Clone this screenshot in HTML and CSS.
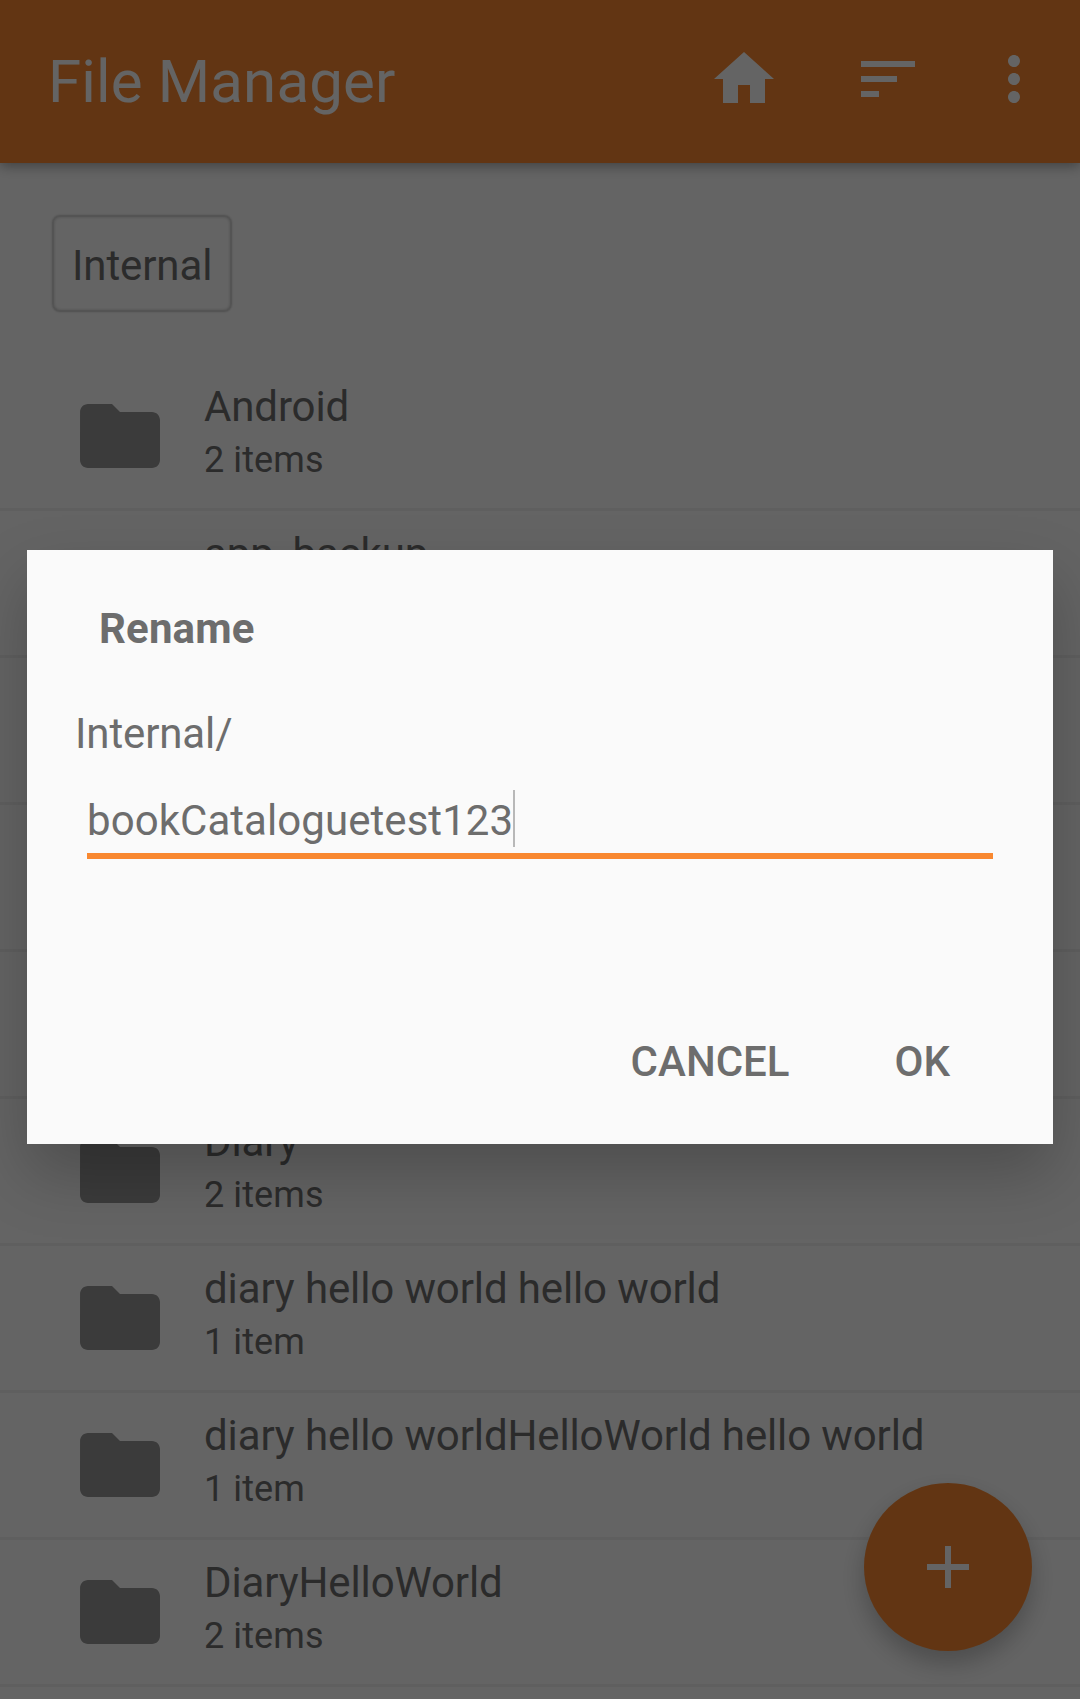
FILE: index.html
```html
<!DOCTYPE html>
<html lang="en">
<head>
<meta charset="utf-8">
<title>File Manager</title>
<link rel="stylesheet" href="styles.css">
</head>
<body>
<svg width="0" height="0" class="defs">
  <symbol id="folder" viewBox="0 0 24 24"><path d="M10 4H4c-1.1 0-1.99.9-1.99 2L2 18c0 1.1.9 2 2 2h16c1.1 0 2-.9 2-2V8c0-1.1-.9-2-2-2h-8l-2-2z"/></symbol>
</svg>
<div class="app">
  <header class="toolbar">
    <h1 class="toolbar-title">File Manager</h1>
    <svg class="action home" viewBox="0 0 24 24"><path d="M10 20v-6h4v6h5v-8h3L12 3 2 12h3v8z"/></svg>
    <svg class="action sort" viewBox="0 0 24 24"><path d="M3 18h6v-2H3v2zM3 6v2h18V6H3zm0 7h12v-2H3v2z"/></svg>
    <svg class="action more" viewBox="0 0 24 24"><path d="M12 8c1.1 0 2-.9 2-2s-.9-2-2-2-2 .9-2 2 .9 2 2 2zm0 2c-1.1 0-2 .9-2 2s.9 2 2 2 2-.9 2-2-.9-2-2-2zm0 6c-1.1 0-2 .9-2 2s.9 2 2 2 2-.9 2-2-.9-2-2-2z"/></svg>
  </header>
  <nav class="path"><span class="crumb">Internal</span></nav>
  <ul class="files">
    <li class="file"><svg class="folder"><use href="#folder"/></svg><div><div class="name">Android</div><div class="count">2 items</div></div></li>
    <li class="file"><svg class="folder"><use href="#folder"/></svg><div><div class="name">app_backup</div></div></li>
    <li class="file"></li>
    <li class="file"></li>
    <li class="file"></li>
    <li class="file"><svg class="folder"><use href="#folder"/></svg><div><div class="name">Diary</div><div class="count">2 items</div></div></li>
    <li class="file"><svg class="folder"><use href="#folder"/></svg><div><div class="name">diary hello world hello world</div><div class="count">1 item</div></div></li>
    <li class="file"><svg class="folder"><use href="#folder"/></svg><div><div class="name">diary hello worldHelloWorld hello world</div><div class="count">1 item</div></div></li>
    <li class="file"><svg class="folder"><use href="#folder"/></svg><div><div class="name">DiaryHelloWorld</div><div class="count">2 items</div></div></li>
  </ul>
  <div class="fab"><svg class="fab-icon" viewBox="0 0 24 24"><path d="M19 13h-6v6h-2v-6H5v-2h6V5h2v6h6v2z"/></svg></div>
</div>
<div class="scrim">
  <section class="dialog">
    <h2 class="dialog-title">Rename</h2>
    <div class="parent">Internal/</div>
    <div class="field"><span>bookCataloguetest123</span><span class="caret"></span></div>
    <div class="buttons"><span class="button">CANCEL</span><span class="button">OK</span></div>
  </section>
</div>
</body>
</html>
```
FILE: styles.css
```css
* { box-sizing: border-box; }
body {
  margin: 0;
  font-family: Roboto, "Liberation Sans", sans-serif;
  font-size: 42px;
  line-height: 50px;
  color: #6d6d6d;
}
.defs { position: absolute; }
.app {
  position: relative;
  width: 1080px;
  height: 1699px;
  overflow: hidden;
  background: #fafafa;
}
.toolbar {
  display: flex;
  align-items: center;
  height: 163px;
  padding: 0 30px 5px 48px;
  background: #f68630;
  box-shadow: 0 3px 12px rgba(0, 0, 0, .36);
}
.toolbar-title {
  flex: 1;
  margin: 0;
  padding-top: 5px;
  font-size: 60px;
  line-height: 72px;
  font-weight: 400;
  letter-spacing: .15px;
  color: #fafafa;
}
.action { width: 72px; height: 72px; fill: #fafafa; }
.sort { margin-left: 72px; }
.more { margin-left: 54px; }
.path { display: flex; height: 201px; padding: 52px 52px 52px; }
.crumb {
  padding: 24px 18px;
  border: 2px solid #d2d2d2;
  border-radius: 8px;
  box-shadow: 0 0 2px rgba(0, 0, 0, .2), inset 0 0 3px rgba(0, 0, 0, .2);
  letter-spacing: -.1px;
}
.files { margin: 0; padding: 0; list-style: none; }
.file {
  display: flex;
  gap: 36px;
  height: 147px;
  padding: 18px 72px 0;
  border-bottom: 3px solid #eee;
  white-space: nowrap;
}
.folder { width: 96px; height: 96px; margin-top: 6px; fill: #949494; }
.name { letter-spacing: -.12px; }
.count {
  margin-top: 7px;
  font-size: 36px;
  line-height: 42px;
  letter-spacing: .1px;
}
.fab {
  position: absolute;
  left: 864px;
  top: 1483px;
  display: flex;
  align-items: center;
  justify-content: center;
  width: 168px;
  height: 168px;
  border-radius: 50%;
  background: #f68630;
  box-shadow: 0 12px 24px rgba(0, 0, 0, .24);
}
.fab-icon { width: 72px; height: 72px; fill: #fafafa; }
.scrim {
  position: absolute;
  inset: 0;
  height: 1699px;
  padding: 550px 27px 0;
  background: rgba(0, 0, 0, .6);
}
.dialog {
  height: 594px;
  padding: 54px 60px 0 48px;
  background: #fafafa;
  box-shadow: 0 30px 60px rgba(0, 0, 0, .22);
}
.dialog-title {
  margin: 0 0 55px 24px;
  font-size: 42px;
  font-weight: 700;
  letter-spacing: .15px;
}
.parent { letter-spacing: -.12px; }
.field {
  display: flex;
  height: 69px;
  margin: 31px 0 0 12px;
  padding-top: 6px;
  border-bottom: 6px solid #f98830;
  letter-spacing: .06px;
}
.caret { width: 2px; height: 57px; margin-top: -6px; background: #b8b8b8; }
.buttons {
  display: flex;
  justify-content: flex-end;
  gap: 105px;
  margin-top: 178px;
  padding-right: 43px;
  font-weight: 500;
}
```
